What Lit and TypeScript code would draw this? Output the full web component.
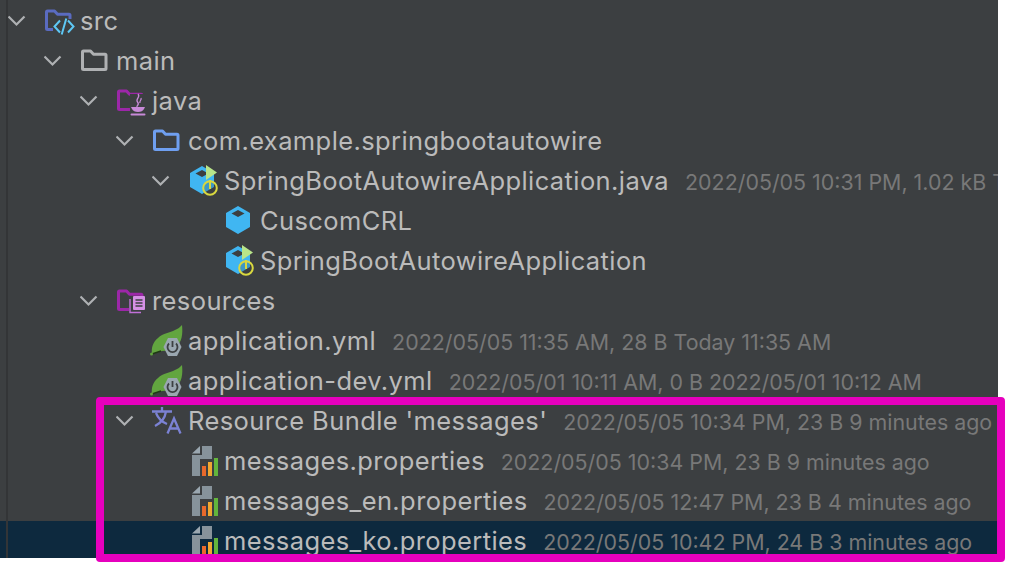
import { LitElement, html, css, svg } from "lit";
import { customElement } from "lit/decorators.js";

const folder = (c: string) => svg`<path d="M2.500 27.500V11q0-1 1-1h7l3 3.200h11.500q1 0 1 1V27.500q0 1-1 1H3.500q-1 0-1-1Z" fill="none" stroke="${c}" stroke-width="3" stroke-linejoin="round"/>`;

const classCube = svg`<path fill-rule="evenodd" d="M14 5l12 7v14l-12 7-12-7V12Zm0 4l-6.500 3.500 6.500 3.500 6.500-3.500Z" fill="#40b6f2"/>`;

const runnable = svg`${classCube}
<path d="M18 4l11 7.500-11 7.500Z" fill="#b9e58a"/>
<circle cx="22" cy="27" r="6.800" fill="#3c3f41" fill-opacity=".25" stroke="#d9d83f" stroke-width="2"/>
<path d="M22 19v9" stroke="#d9d83f" stroke-width="2"/>`;

const spring = svg`<path d="M30 4c1 9 0 17-6 22-4 3-9 4-14 4l-6 2-4 1c-1-6 1-12 6-16 5-5 12-5 17-8 3-1 5-3 7-5Z" fill="#62a53f"/>
<path d="M0 33l9-3" stroke="#1f3a14" stroke-width="1.500"/><circle cx="-.5" cy="33" r="1.500" fill="#62a53f"/>
<path d="M16 17h9l4.500 9-4.500 9h-9l-4.500-9Z" fill="#9aa7b0"/>
<path d="M17 22.500a5 5 0 1 0 7 0" fill="none" stroke="#3c3f41" stroke-width="1.800"/><path d="M20.500 20v6" stroke="#3c3f41" stroke-width="1.800"/>`;

const icons: Record<string, unknown> = {
  src: svg`${folder("#5a6bc0")}
    <rect x="9" y="18" width="22" height="16" fill="#3c3f41"/>
    <path d="M16 19.500l-5.500 6 5.500 6M24 19.500l5.500 6-5.500 6M22.300 17.500l-4.600 16" fill="none" stroke="#5ec8f5" stroke-width="2"/>`,
  main: folder("#afb1b3"),
  java: svg`${folder("#9c27a8")}
    <rect x="14" y="13" width="16" height="22" fill="#3c3f41"/>
    <path d="M22 13c3 3-3 5-.5 8s-1 3-.5 5M25 17c1 2-2 3-1 5" fill="none" stroke="#c88ad8" stroke-width="1.300"/>
    <path d="M15 26h14l-1 2c-1 2-3 3-6 3s-5-1-6-3Z" fill="#c88ad8"/>
    <path d="M15.500 33.500h13" stroke="#c88ad8" stroke-width="2" stroke-linecap="round"/>`,
  pkg: folder("#6f9ff0"),
  runnable,
  cube: classCube,
  res: svg`${folder("#9c27a8")}
    <rect x="13" y="15" width="17" height="18" fill="#3c3f41"/>
    <path d="M14 18v13.500h11" fill="none" stroke="#c070d8" stroke-width="1.400"/>
    <rect x="17" y="15" width="12" height="14" rx="1" fill="#d590e5"/>
    <path d="M19.500 19h7M19.500 22h7M19.500 25h7" stroke="#3c3f41" stroke-width="1.400"/>`,
  spring,
  bundle: svg`<g fill="none" stroke="#7b82d4" stroke-width="2.300">
      <path d="M0 10.500h20M10 6v4.500M3 25c6-3 10-8 11-14.500M4 12c2 5 6 9 11 11"/>
      <path d="M15.500 32.500l6.500-15 6.500 15M18 27.500h8"/></g>`,
  prop: svg`<path d="M4 12.500l8-7.500v7.500Z" fill="#9aa7b0"/>
    <path d="M14 5H24V18H12V35H4V14H14Z" fill="#87939b"/>
    <rect x="14" y="25" width="4" height="10" fill="#e8692c"/>
    <rect x="20" y="21" width="4" height="14" fill="#f0a732"/>
    <rect x="26" y="17" width="4" height="18" fill="#63b53c"/>`,
};

interface Row { d: number; open: boolean; icon: string; name: string; meta?: string; sel?: boolean; }

const rows: Row[] = [
  { d: 0, open: true, icon: "src", name: "src" },
  { d: 1, open: true, icon: "main", name: "main" },
  { d: 2, open: true, icon: "java", name: "java" },
  { d: 3, open: true, icon: "pkg", name: "com.example.springbootautowire" },
  { d: 4, open: true, icon: "runnable", name: "SpringBootAutowireApplication.java", meta: "2022/05/05 10:31 PM, 1.02 kB Today 10:31 PM" },
  { d: 5, open: false, icon: "cube", name: "CuscomCRL" },
  { d: 5, open: false, icon: "runnable", name: "SpringBootAutowireApplication" },
  { d: 2, open: true, icon: "res", name: "resources" },
  { d: 3, open: false, icon: "spring", name: "application.yml", meta: "2022/05/05 11:35 AM, 28 B Today 11:35 AM" },
  { d: 3, open: false, icon: "spring", name: "application-dev.yml", meta: "2022/05/01 10:11 AM, 0 B 2022/05/01 10:12 AM" },
  { d: 3, open: true, icon: "bundle", name: "Resource Bundle 'messages'", meta: "2022/05/05 10:34 PM, 23 B 9 minutes ago" },
  { d: 4, open: false, icon: "prop", name: "messages.properties", meta: "2022/05/05 10:34 PM, 23 B 9 minutes ago" },
  { d: 4, open: false, icon: "prop", name: "messages_en.properties", meta: "2022/05/05 12:47 PM, 23 B 4 minutes ago" },
  { d: 4, open: false, icon: "prop", name: "messages_ko.properties", meta: "2022/05/05 10:42 PM, 24 B 3 minutes ago", sel: true },
];

@customElement("app-root")
export class AppRoot extends LitElement {
  static styles = css`
    :host { display: block; position: relative; width: 1010px; height: 566px; background: #fff; overflow: hidden; font-family: Inter, "Liberation Sans", sans-serif; }
    .panel { width: 998px; height: 558px; box-sizing: border-box; padding-top: 1px; background: #3c3f41; overflow: hidden; position: relative; }
    .gutter { position: absolute; left: 6px; top: 0; bottom: 0; width: 2px; background: #333537; z-index: 2; }
    .row { display: flex; align-items: center; height: 40px; box-sizing: border-box; white-space: nowrap; }
    .row.sel { background: #0d293e; }
    .arrow { width: 36px; height: 40px; flex: none; display: block; }
    .icon { width: 36px; height: 40px; flex: none; display: block; overflow: visible; }
    .name { color: #bbbbbb; font-size: 25.500px; letter-spacing: 0.4px; line-height: 40px; }
    .meta { color: #787878; font-size: 21.400px; line-height: 40px; margin: 2px 0 0 16px; }
    .mark { position: absolute; left: 96px; top: 397px; width: 909px; height: 165px; box-sizing: border-box; border: 8px solid #e600bd; border-radius: 4px; pointer-events: none; }
  `;

  render() {
    return html`<div class="panel">
        <div class="gutter"></div>
        ${rows.map((r) => html`<div class="row ${r.sel ? "sel" : ""}" style="padding-left:${8 + r.d * 36}px">
            <svg class="arrow" viewBox="0 0 36 40">${r.open ? svg`<path d="M0.500 15.500l8 8 8-8" fill="none" stroke="#afb1b3" stroke-width="2.200"/>` : ""}</svg>
            <svg class="icon" viewBox="0 0 36 40">${icons[r.icon]}</svg>
            <span class="name">${r.name}</span>
            ${r.meta ? html`<span class="meta">${r.meta}</span>` : ""}
          </div>`)}
      </div>
      <div class="mark"></div>`;
  }
}
